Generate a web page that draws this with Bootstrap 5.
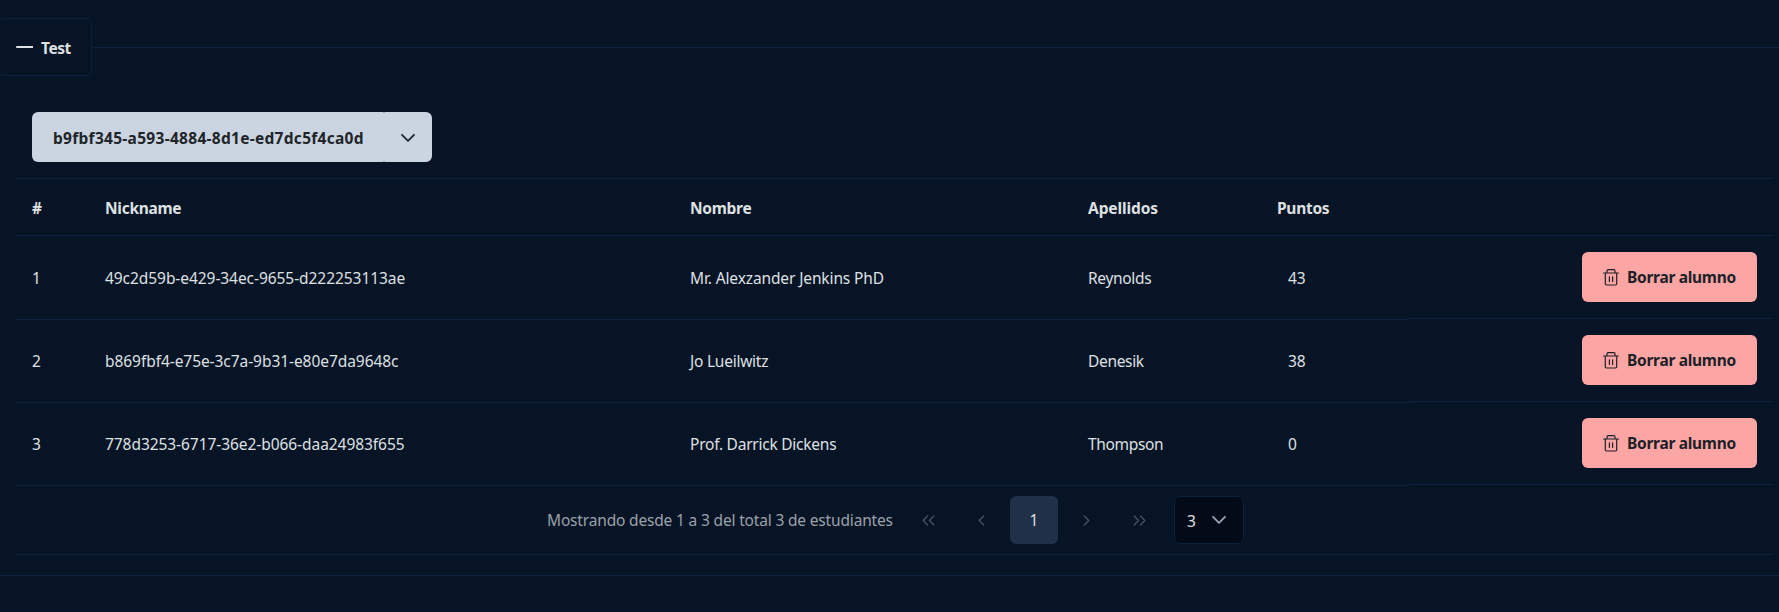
<!DOCTYPE html>
<html lang="es" data-bs-theme="dark">
<head>
<meta charset="utf-8">
<meta name="viewport" content="width=device-width, initial-scale=1">
<title>Test</title>
<link href="https://cdn.jsdelivr.net/npm/bootstrap@5.3.0/dist/css/bootstrap.min.css" rel="stylesheet">
<style>
:root{--line:#0b213f;--ink:#dee0e2}
body{background:#071426;color:var(--ink);font:15.5px/24px "Noto Sans","Open Sans",sans-serif;padding-top:18px;overflow:hidden}
svg{fill:none;stroke:currentColor;stroke-linecap:round;stroke-linejoin:round;display:block;flex:none}
.panel-box{border-bottom:1px solid var(--line);height:558px}
.panel-title{height:58px;width:94px;margin-left:-2px;padding:1px 0 0 17px;border:1px solid var(--line);border-radius:6px;font-weight:700;letter-spacing:-.45px;color:inherit;background:none}
.panel-title svg{margin-right:8px}
.panel-rule{border-top:1px solid var(--line);margin-top:1px}
.tools{padding:36px 32px 16px}
.tools .btn{--bs-btn-border-width:0;background:#cbd5e1;color:#212529;height:50px;font-size:15.5px;font-weight:700;line-height:24px;padding:1px 0 0}
.tools .main{width:352px;border-radius:6px 1px 1px 6px;text-align:left;padding-left:21px;letter-spacing:.29px}
.tools .more{width:48px;border-radius:1px 6px 6px 1px;padding-left:17px}
.grid-box{margin:0 6px 0 16px}
.students{table-layout:fixed;border-collapse:separate;border-spacing:0;width:100%;margin:0}
.students th,.students td{border:0 solid var(--line);border-bottom-width:1px;padding:0 16px;text-align:left;vertical-align:middle;white-space:nowrap}
.students th{height:58px;border-top-width:1px;padding-top:1px;font-weight:700;letter-spacing:-.28px}
.students th:nth-child(4){letter-spacing:-.1px}
.students td{height:83px}
.students tr:first-child td{height:84px}
.students .uuid{letter-spacing:-.06px}
.students .name{letter-spacing:-.12px}
.students tr:not(:first-child) .name{letter-spacing:-.24px}
.students .last{letter-spacing:-.33px}
.students .pts{padding-left:27px;letter-spacing:-.2px}
.students .act{transform:translateY(-1px)}
.students tr:first-child .act{padding-top:1px}
.del{--bs-btn-border-width:0;background:#fca5a5;color:#1c2127;width:175px;height:50px;border-radius:6px;margin-left:auto;padding:0 0 0 21px;font-size:15.5px;font-weight:700;line-height:24px;letter-spacing:-.29px}
.del svg{margin-right:8px}
.pager{height:69px;border-bottom:1px solid var(--line);padding-left:531px}
.pager .info{width:355.500px;color:#9ba1a8;letter-spacing:-.17px;white-space:nowrap}
.pager .page-item{padding:0 2.286px}
.pager .page-item .page-link{width:48px;height:48px;margin:0;padding:0;border:0;border-radius:6px;background:none;color:#47515f;font-size:15.5px}
.pager .active .page-link{background:#1f3048;color:var(--ink)}
.rows{width:70px;height:48px;margin-left:8.600px;border:1px solid var(--line);border-radius:6px;background:#040b18;padding:2px 17px 0 12px}
.rows svg{color:#9aa2b4;margin-top:-3px}
</style>
</head>
<body>
<section class="panel-box">
  <div class="d-flex align-items-center">
    <button class="panel-title d-flex align-items-center">
      <svg width="17" height="16" stroke-width="2" stroke-linecap="butt"><path d="M1 7h15.500"/></svg>Test
    </button>
    <div class="panel-rule flex-grow-1"></div>
  </div>
  <div class="tools d-flex">
    <button class="btn main">b9fbf345-a593-4884-8d1e-ed7dc5f4ca0d</button>
    <button class="btn more" aria-label="Abrir"><svg width="14" height="10" stroke-width="1.8"><path d="M1 1.800 7 7.800l6-6"/></svg></button>
  </div>
  <div class="grid-box">
    <table class="students">
      <colgroup><col style="width:73px"><col style="width:585px"><col style="width:398px"><col style="width:189px"><col style="width:148px"><col></colgroup>
      <thead><tr><th>#</th><th>Nickname</th><th>Nombre</th><th>Apellidos</th><th>Puntos</th><th></th></tr></thead>
      <tbody>
        <tr><td>1</td><td class="uuid">49c2d59b-e429-34ec-9655-d222253113ae</td><td class="name">Mr. Alexzander Jenkins PhD</td><td class="last">Reynolds</td><td class="pts">43</td>
          <td class="act"><button class="btn del d-flex align-items-center"><svg width="16" height="17" stroke-width="1.2"><path d="M.6 4h14.800M4 4V1.900q0-1.200 1.200-1.200h5.600q1.200 0 1.200 1.200V4M2.300 4v10.800q0 1.200 1.200 1.200h9q1.200 0 1.200-1.200V4M6.400 7.800v4.700M9.600 7.800v4.700"/></svg>Borrar alumno</button></td></tr>
        <tr><td>2</td><td class="uuid">b869fbf4-e75e-3c7a-9b31-e80e7da9648c</td><td class="name">Jo Lueilwitz</td><td class="last">Denesik</td><td class="pts">38</td>
          <td class="act"><button class="btn del d-flex align-items-center"><svg width="16" height="17" stroke-width="1.2"><path d="M.6 4h14.800M4 4V1.900q0-1.200 1.200-1.200h5.600q1.200 0 1.200 1.200V4M2.300 4v10.800q0 1.200 1.200 1.200h9q1.200 0 1.200-1.200V4M6.400 7.800v4.700M9.600 7.800v4.700"/></svg>Borrar alumno</button></td></tr>
        <tr><td>3</td><td class="uuid">778d3253-6717-36e2-b066-daa24983f655</td><td class="name">Prof. Darrick Dickens</td><td class="last">Thompson</td><td class="pts">0</td>
          <td class="act"><button class="btn del d-flex align-items-center"><svg width="16" height="17" stroke-width="1.2"><path d="M.6 4h14.800M4 4V1.900q0-1.200 1.200-1.200h5.600q1.200 0 1.200 1.200V4M2.300 4v10.800q0 1.200 1.200 1.200h9q1.200 0 1.200-1.200V4M6.400 7.800v4.700M9.600 7.800v4.700"/></svg>Borrar alumno</button></td></tr>
      </tbody>
    </table>
    <nav class="pager d-flex align-items-center">
      <span class="info">Mostrando desde 1 a 3 del total 3 de estudiantes</span>
      <ul class="pagination m-0">
        <li class="page-item"><a class="page-link d-flex align-items-center justify-content-center"><svg width="13" height="11" stroke-width="1.400"><path d="M5.500 1 1.200 5.500l4.300 4.500M11.800 1 7.500 5.500l4.300 4.500"/></svg></a></li>
        <li class="page-item"><a class="page-link d-flex align-items-center justify-content-center"><svg width="7" height="11" stroke-width="1.400"><path d="M5.700 1 1.200 5.500l4.500 4.500"/></svg></a></li>
        <li class="page-item active"><a class="page-link d-flex align-items-center justify-content-center">1</a></li>
        <li class="page-item"><a class="page-link d-flex align-items-center justify-content-center"><svg width="7" height="11" stroke-width="1.400"><path d="m1.300 1 4.500 4.500L1.300 10"/></svg></a></li>
        <li class="page-item"><a class="page-link d-flex align-items-center justify-content-center"><svg width="13" height="11" stroke-width="1.400"><path d="m1.200 1 4.300 4.500L1.200 10M7.500 1l4.300 4.500L7.500 10"/></svg></a></li>
      </ul>
      <div class="rows d-flex align-items-center justify-content-between"><span>3</span><svg width="14" height="10" stroke-width="1.800"><path d="M1 1.800 7 7.800l6-6"/></svg></div>
    </nav>
  </div>
</section>
<script src="https://cdn.jsdelivr.net/npm/bootstrap@5.3.0/dist/js/bootstrap.bundle.min.js"></script>
</body>
</html>
